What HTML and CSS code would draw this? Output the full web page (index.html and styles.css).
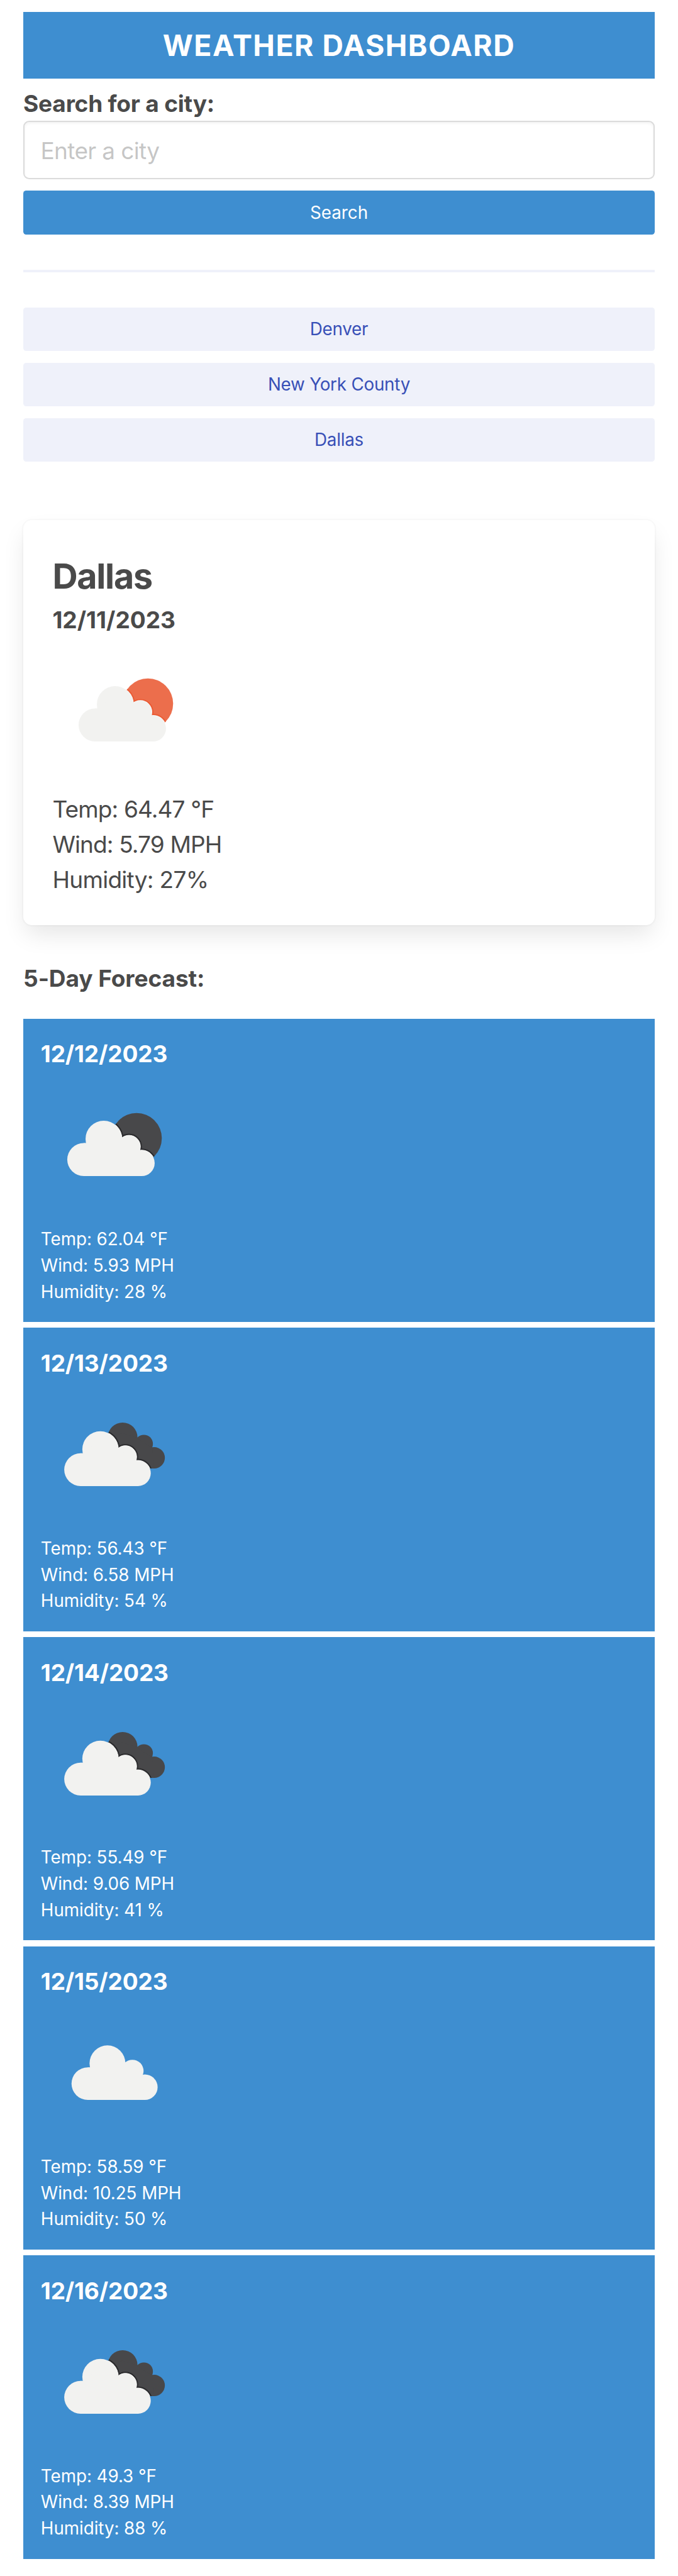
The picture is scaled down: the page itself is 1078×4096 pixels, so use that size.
FILE: index.html
```
<!DOCTYPE html>
<html lang="en">
<head>
<meta charset="utf-8">
<meta name="viewport" content="width=device-width, initial-scale=1">
<title>Weather Dashboard</title>
<link rel="stylesheet" href="styles.css">
</head>
<body>
<svg class="sprite" aria-hidden="true">
  <defs>
    <g id="cloud-shape">
      <circle cx="29.45" cy="60.75" r="11.35"/>
      <circle cx="43.15" cy="46.6" r="12.5"/>
      <circle cx="60.5" cy="51.9" r="7.8"/>
      <circle cx="69.2" cy="63.2" r="8.9"/>
      <path d="M29.45 49.4H31L43 40L55.6 46L60.5 50L67.5 54.5L69.2 72.1H29.45Z"/>
    </g>
    <g id="back-cloud-shape">
      <circle cx="56.1" cy="39.1" r="10.2"/>
      <circle cx="70.7" cy="43.5" r="6.2"/>
      <circle cx="77.8" cy="53.1" r="7.3"/>
      <path d="M46 40L56 36L66.2 39.5L70.7 43L76.5 46L77.8 60.4H68L46 50Z"/>
    </g>
    <clipPath id="disc-clip"><circle cx="65.7" cy="46.1" r="17.3"/></clipPath>
    <clipPath id="back-clip">
      <circle cx="56.1" cy="39.1" r="10.2"/>
      <circle cx="70.7" cy="43.5" r="6.2"/>
      <circle cx="77.8" cy="53.1" r="7.3"/>
      <path d="M46 40L56 36L66.2 39.5L70.7 43L76.5 46L77.8 60.4H68L46 50Z"/>
    </clipPath>
    <symbol id="few-clouds-day" viewBox="0 0 100 100">
      <circle cx="65.7" cy="46.1" r="17.3" fill="#ec6e4c"/>
      <g clip-path="url(#disc-clip)">
        <use href="#cloud-shape" fill="#eb5a33" stroke="#eb5a33" stroke-width="2.4"/>
        <use href="#cloud-shape" fill="#f4fbfc" stroke="#f4fbfc" stroke-width=".7"/>
      </g>
      <use href="#cloud-shape" fill="#f2f2f0"/>
    </symbol>
    <symbol id="few-clouds-night" viewBox="0 0 100 100">
      <circle cx="65.7" cy="46.1" r="17.3" fill="#48484a"/>
      <g clip-path="url(#disc-clip)">
        <use href="#cloud-shape" fill="#2b2b2d" stroke="#2b2b2d" stroke-width="2.2"/>
        <use href="#cloud-shape" fill="#fff" stroke="#fff" stroke-width=".4"/>
      </g>
      <use href="#cloud-shape" fill="#f2f2f0"/>
    </symbol>
    <symbol id="broken-clouds" viewBox="0 0 100 100">
      <use href="#back-cloud-shape" fill="#48484a"/>
      <g clip-path="url(#back-clip)">
        <g transform="translate(-1.9 1.1) scale(.99)">
          <use href="#cloud-shape" fill="#2b2b2d" stroke="#2b2b2d" stroke-width="2.2"/>
          <use href="#cloud-shape" fill="#fff" stroke="#fff" stroke-width=".4"/>
        </g>
      </g>
      <use href="#cloud-shape" fill="#f2f2f0" transform="translate(-1.9 1.1) scale(.99)"/>
    </symbol>
    <symbol id="scattered-clouds" viewBox="0 0 100 100">
      <use href="#cloud-shape" fill="#f2f2f0" transform="translate(3.2 -1.5) scale(.985)"/>
    </symbol>
  </defs>
</svg>

<header class="banner"><h1 class="banner-title">WEATHER DASHBOARD</h1></header>

<main>
  <form class="search">
    <label class="search-label" for="city">Search for a city:</label>
    <input class="search-input" id="city" type="text" placeholder="Enter a city">
    <button class="button button-primary" type="button">Search</button>
  </form>
  <hr class="divider">
  <div class="history">
    <button class="button button-light" type="button">Denver</button>
    <button class="button button-light" type="button">New York County</button>
    <button class="button button-light" type="button">Dallas</button>
  </div>

  <section class="current">
    <h2 class="current-city">Dallas</h2>
    <h3 class="current-date">12/11/2023</h3>
    <div class="icon-row"><svg class="weather-icon"><use href="#few-clouds-day"/></svg></div>
    <p class="current-temp">Temp: 64.47 °F</p>
    <p class="current-wind">Wind: 5.79 MPH</p>
    <p class="current-humidity">Humidity: 27%</p>
  </section>

  <h3 class="forecast-title">5-Day Forecast:</h3>
  <section class="forecast">
    <article class="day">
      <h4 class="day-date">12/12/2023</h4>
      <div class="icon-row"><svg class="weather-icon"><use href="#few-clouds-night"/></svg></div>
      <p>Temp: 62.04 °F</p>
      <p>Wind: 5.93 MPH</p>
      <p>Humidity: 28 %</p>
    </article>
    <article class="day">
      <h4 class="day-date">12/13/2023</h4>
      <div class="icon-row"><svg class="weather-icon"><use href="#broken-clouds"/></svg></div>
      <p>Temp: 56.43 °F</p>
      <p>Wind: 6.58 MPH</p>
      <p>Humidity: 54 %</p>
    </article>
    <article class="day">
      <h4 class="day-date">12/14/2023</h4>
      <div class="icon-row"><svg class="weather-icon"><use href="#broken-clouds"/></svg></div>
      <p>Temp: 55.49 °F</p>
      <p>Wind: 9.06 MPH</p>
      <p>Humidity: 41 %</p>
    </article>
    <article class="day">
      <h4 class="day-date">12/15/2023</h4>
      <div class="icon-row"><svg class="weather-icon"><use href="#scattered-clouds"/></svg></div>
      <p>Temp: 58.59 °F</p>
      <p>Wind: 10.25 MPH</p>
      <p>Humidity: 50 %</p>
    </article>
    <article class="day">
      <h4 class="day-date">12/16/2023</h4>
      <div class="icon-row"><svg class="weather-icon"><use href="#broken-clouds"/></svg></div>
      <p>Temp: 49.3 °F</p>
      <p>Wind: 8.39 MPH</p>
      <p>Humidity: 88 %</p>
    </article>
  </section>
</main>
</body>
</html>
```
FILE: styles.css
```
*,
*::before,
*::after {
  box-sizing: border-box;
}

html {
  font-size: 37.066px;
  background: #fff;
}

body {
  margin: 0;
  padding: .5rem 1rem .75rem;
  color: #4a4a4a;
  font-family: Inter, "Liberation Sans", sans-serif;
  font-size: 1rem;
  font-weight: 400;
  line-height: 1.5;
}

h1, h2, h3, h4, p {
  margin: 0;
}

.sprite {
  display: block;
  width: 0;
  height: 0;
}

.banner {
  padding: .527rem .5rem .473rem;
  background: #3e8ed0;
  color: #fff;
  text-align: center;
}

.banner-title {
  font-size: 1.25rem;
  font-weight: 700;
  letter-spacing: .0323em;
}

.search {
  display: flex;
  flex-direction: column;
  padding-top: .3125rem;
}

.search-label {
  font-weight: 700;
  letter-spacing: -.0057em;
}

.search-input {
  width: 100%;
  height: 2.5rem;
  margin: 0 0 .5rem;
  padding: .04rem .6875rem 0;
  border: .0625rem solid #dbdbdb;
  border-radius: .25rem;
  background: #fff;
  box-shadow: inset 0 .0625rem .125rem rgba(10, 10, 10, .05);
  color: #363636;
  font: inherit;
  letter-spacing: -.0183em;
}

.search-input::placeholder {
  color: rgba(54, 54, 54, .3);
  opacity: 1;
}

.button {
  display: block;
  width: 100%;
  height: 1.875rem;
  margin: 0;
  padding: .03rem 0 0;
  border: 0;
  border-radius: .125rem;
  font: inherit;
  font-size: .75rem;
  text-align: center;
}

.button-primary {
  background: #3e8ed0;
  color: #fff;
}

.button-light {
  background: #eff1fa;
  color: #3850b7;
  letter-spacing: -.008em;
}

.divider {
  height: .125rem;
  margin: 1.5rem 0;
  border: 0;
  background: #eff1fa;
}

.history {
  display: flex;
  flex-direction: column;
  gap: .5rem;
}

.current {
  margin-top: 2.5rem;
  padding: 1.277rem 1.25rem 1.223rem;
  border-radius: .375rem;
  background: #fff;
  box-shadow: 0 .5rem 1rem -.125rem rgba(10, 10, 10, .1), 0 0 0 .0625rem rgba(10, 10, 10, .02);
}

.current-city {
  font-size: 1.5rem;
  font-weight: 700;
  letter-spacing: -.0226em;
}

.current-date {
  font-size: 1rem;
  font-weight: 700;
}

.icon-row {
  display: flow-root;
  height: 6.64rem;
}

.weather-icon {
  display: block;
  width: 6.25rem;
  height: 6.25rem;
  margin-top: -.02rem;
}

.current-temp,
.current-wind {
  letter-spacing: -.0241em;
}

.current-humidity {
  letter-spacing: -.0193em;
}

.forecast-title {
  margin: 1.53rem 0 .97rem;
  font-size: 1rem;
  font-weight: 700;
  letter-spacing: -.0027em;
}

.forecast {
  display: flex;
  flex-direction: column;
  gap: .25rem;
}

.day {
  padding: .777rem .75rem .723rem;
  background: #3e8ed0;
  color: #fff;
  font-size: .75rem;
  letter-spacing: -.0025em;
}

.day-date {
  font-size: 1rem;
  font-weight: 700;
  letter-spacing: -.0045em;
}
```
